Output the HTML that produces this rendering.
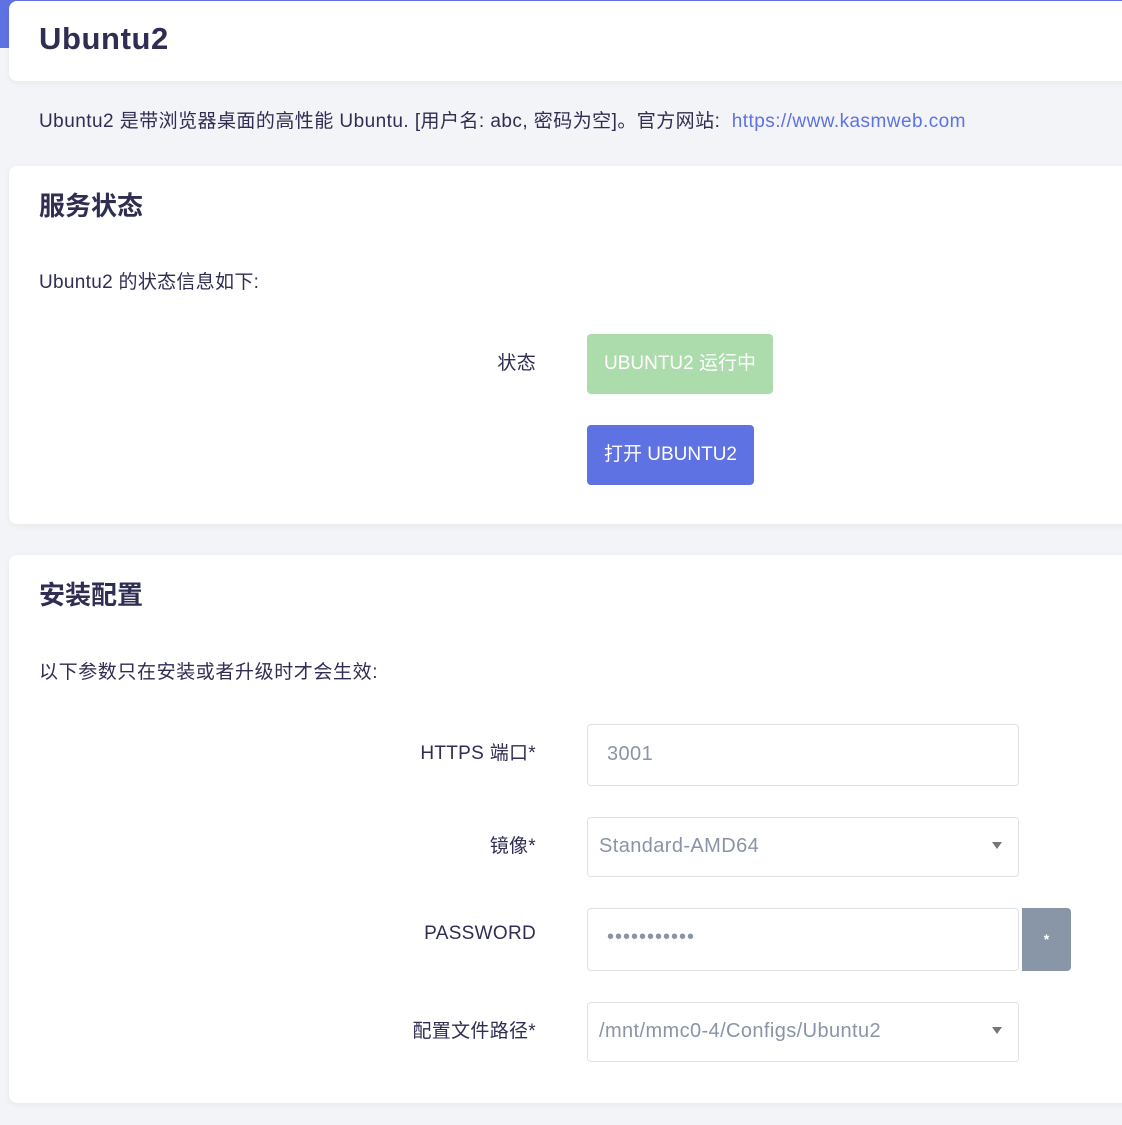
<!DOCTYPE html>
<html><head><meta charset="utf-8"><style>
body{margin:0;width:1122px;height:1125px;background:#f3f4f7;font-family:"Liberation Sans","Noto Sans CJK SC",sans-serif;color:#2f2d52;position:relative;overflow:hidden}
.band{position:absolute;left:0;top:0;width:1122px;height:48px;background:#5f72e4}
.card{position:absolute;left:9px;width:1130px;background:#fff;border-radius:8px;box-shadow:0 2px 6px rgba(0,0,0,.05)}
.t{position:absolute;left:39px;white-space:nowrap}
.lbl{position:absolute;right:586px;font-size:19px;white-space:nowrap;color:#2f2d52;letter-spacing:.3px}
.inp{position:absolute;left:587px;width:432px;border:1px solid #dee2e6;border-radius:4px;background:#fff;color:#8a94a6;font-size:20px;box-sizing:border-box;letter-spacing:.4px}
.arr{position:absolute;right:16px;top:24px;width:0;height:0;border-left:5px solid transparent;border-right:5px solid transparent;border-top:7px solid #777}
</style></head><body>
<div class="band"></div>
<div class="card" style="top:1px;height:80px"><div class="t" style="left:30px;top:20px;font-size:31px;font-weight:bold;color:#2f2d52;letter-spacing:.6px">Ubuntu2</div></div>
<div class="t" style="top:106px;font-size:19px;letter-spacing:.45px">Ubuntu2 是带浏览器桌面的高性能 Ubuntu. [用户名: abc, 密码为空]。官方网站: &nbsp;<span style="color:#5e72e4">https://www.kasmweb.com</span></div>
<div class="card" style="top:166px;height:358px"></div>
<div class="t" style="top:186px;font-size:26px;font-weight:bold">服务状态</div>
<div class="t" style="top:267px;font-size:19px;letter-spacing:.3px">Ubuntu2 的状态信息如下:</div>
<div class="lbl" style="top:348px">状态</div>
<div style="position:absolute;left:587px;top:334px;width:186px;height:60px;background:#acdcac;border-radius:4px;color:#fff;font-size:19px;line-height:60px;text-align:center">UBUNTU2 运行中</div>
<div style="position:absolute;left:587px;top:425px;width:167px;height:60px;background:#5e72e4;border-radius:4px;color:#fff;font-size:19px;line-height:60px;text-align:center">打开 UBUNTU2</div>
<div class="card" style="top:555px;height:548px"></div>
<div class="t" style="top:575px;font-size:26px;font-weight:bold">安装配置</div>
<div class="t" style="top:657px;font-size:19px;letter-spacing:.6px">以下参数只在安装或者升级时才会生效:</div>
<div class="lbl" style="top:738px">HTTPS 端口*</div>
<div class="inp" style="top:724px;height:62px;padding:18px 0 0 19px">3001</div>
<div class="lbl" style="top:831px">镜像*</div>
<div class="inp" style="top:817px;height:60px;padding:17px 0 0 11px">Standard-AMD64<div class="arr"></div></div>
<div class="lbl" style="top:923px">PASSWORD</div>
<div class="inp" style="top:908px;height:63px;width:432px;padding:17px 0 0 19px;letter-spacing:1px">•••••••••••</div>
<div style="position:absolute;left:1022px;top:908px;width:49px;height:63px;background:#8996a8;border-radius:0 4px 4px 0;color:#fff;text-align:center;line-height:63px;font-size:14px;font-weight:bold">*</div>
<div class="lbl" style="top:1016px">配置文件路径*</div>
<div class="inp" style="top:1002px;height:60px;padding:17px 0 0 11px">/mnt/mmc0-4/Configs/Ubuntu2<div class="arr"></div></div>
</body></html>
